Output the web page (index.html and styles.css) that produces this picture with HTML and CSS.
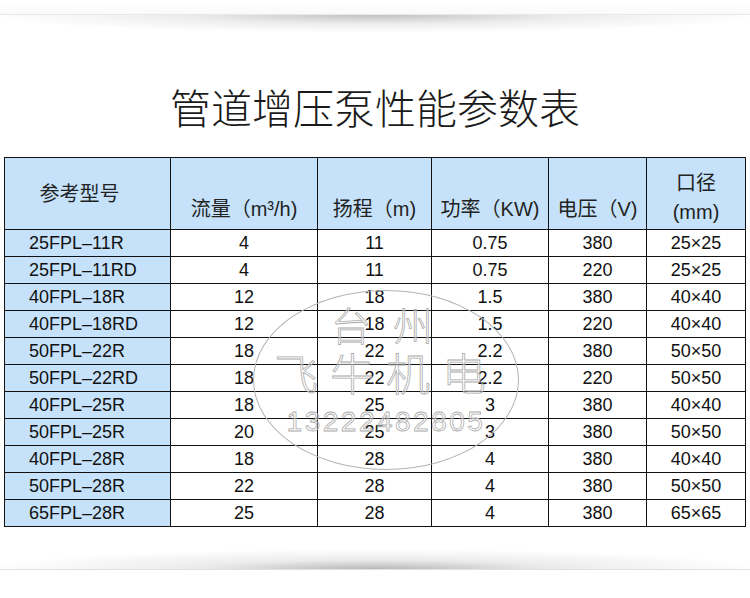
FILE: index.html
```html
<!DOCTYPE html>
<html lang="zh-CN">
<head>
<meta charset="utf-8">
<title>管道增压泵性能参数表</title>
<link rel="stylesheet" href="styles.css">
</head>
<body>
<div class="page">
  <div class="top-edge"></div>
  <div class="top-shadow"></div>
  <h1 class="title">管道增压泵性能参数表</h1>
  <div class="table-wrap">
    <table class="spec">
      <colgroup>
        <col class="c1"><col class="c2"><col class="c3"><col class="c4"><col class="c5"><col class="c6">
      </colgroup>
      <thead>
        <tr>
          <th class="h-mid">参考型号</th>
          <th class="h-low">流量（m³/h)</th>
          <th class="h-low">扬程（m)</th>
          <th class="h-low">功率（KW)</th>
          <th class="h-low">电压（V)</th>
          <th class="h-two">口径<br>(mm)</th>
        </tr>
      </thead>
      <tbody>
        <tr><td class="model">25FPL–11R</td><td>4</td><td>11</td><td>0.75</td><td>380</td><td>25×25</td></tr>
        <tr><td class="model">25FPL–11RD</td><td>4</td><td>11</td><td>0.75</td><td>220</td><td>25×25</td></tr>
        <tr><td class="model">40FPL–18R</td><td>12</td><td>18</td><td>1.5</td><td>380</td><td>40×40</td></tr>
        <tr><td class="model">40FPL–18RD</td><td>12</td><td>18</td><td>1.5</td><td>220</td><td>40×40</td></tr>
        <tr><td class="model">50FPL–22R</td><td>18</td><td>22</td><td>2.2</td><td>380</td><td>50×50</td></tr>
        <tr><td class="model">50FPL–22RD</td><td>18</td><td>22</td><td>2.2</td><td>220</td><td>50×50</td></tr>
        <tr><td class="model">40FPL–25R</td><td>18</td><td>25</td><td>3</td><td>380</td><td>40×40</td></tr>
        <tr><td class="model">50FPL–25R</td><td>20</td><td>25</td><td>3</td><td>380</td><td>50×50</td></tr>
        <tr><td class="model">40FPL–28R</td><td>18</td><td>28</td><td>4</td><td>380</td><td>40×40</td></tr>
        <tr><td class="model">50FPL–28R</td><td>22</td><td>28</td><td>4</td><td>380</td><td>50×50</td></tr>
        <tr><td class="model">65FPL–28R</td><td>25</td><td>28</td><td>4</td><td>380</td><td>65×65</td></tr>
      </tbody>
    </table>
    <div class="watermark">
      <div class="wm-line wm-city">台州</div>
      <div class="wm-line wm-name">飞牛机电</div>
      <div class="wm-line wm-phone">13222482805</div>
    </div>
  </div>
  <div class="bottom-shadow"></div>
  <div class="bottom-edge"></div>
</div>
</body>
</html>
```

FILE: styles.css
```css
html, body {
  margin: 0;
  padding: 0;
  background: #ffffff;
}

body {
  font-family: "Liberation Sans", "Noto Sans CJK SC", sans-serif;
  color: #111111;
}

.page {
  width: 750px;
  height: 598px;
  overflow: hidden;
  display: flex;
  flex-direction: column;
}

.top-edge {
  height: 14px;
  background: linear-gradient(#ffffff, #fafafa);
  border-bottom: 1px solid #e8e8e8;
}

.top-shadow {
  height: 18px;
  background: radial-gradient(ellipse 52% 100% at 50% 0%, rgba(0, 0, 0, 0.24), rgba(0, 0, 0, 0.07) 50%, rgba(0, 0, 0, 0) 100%);
}

.title {
  margin: 49px 0 27px;
  height: 48px;
  line-height: 48px;
  text-align: center;
  font-family: "Noto Sans CJK SC", sans-serif;
  font-weight: 300;
  font-size: 41px;
  color: #1a1a1a;
}

.table-wrap {
  position: relative;
  margin-left: 4px;
  width: 741px;
}

.spec {
  border-collapse: collapse;
  width: 741px;
  table-layout: fixed;
}

.c1 { width: 166px; }
.c2 { width: 147px; }
.c3 { width: 114px; }
.c4 { width: 117px; }
.c5 { width: 98px; }
.c6 { width: 99px; }

.spec th,
.spec td {
  border: 1px solid #111111;
  padding: 0;
}

.spec th {
  background: #c6e2fa;
  font-weight: normal;
  font-size: 20px;
  color: #222222;
  vertical-align: middle;
}

.spec .h-mid {
  height: 69px;
  padding-right: 16px;
  padding-bottom: 2px;
}

.spec .h-low {
  height: 43px;
  padding-top: 28px;
  white-space: nowrap;
}

.spec .h-two {
  height: 63px;
  padding-top: 8px;
  line-height: 29px;
}

.spec td {
  height: 26px;
  font-size: 18px;
  text-align: center;
  vertical-align: middle;
  line-height: 26px;
  color: #111111;
}

.spec td.model {
  background: #c6e2fa;
  text-align: left;
  padding-left: 24px;
}

.watermark {
  position: absolute;
  left: 249px;
  top: 133px;
  width: 264px;
  height: 178px;
  border: 1px solid #b4b4b4;
  border-radius: 50%;
  display: flex;
  flex-direction: column;
  align-items: center;
  pointer-events: none;
  font-family: "Noto Sans CJK SC", sans-serif;
  font-weight: 300;
  color: rgba(255, 255, 255, 0.35);
  -webkit-text-stroke: 0.8px #acacac;
}

.wm-line {
  line-height: 1;
  white-space: nowrap;
}

.wm-city {
  margin-top: 13px;
  font-size: 40px;
  letter-spacing: 22px;
  margin-left: 14px;
}

.wm-name {
  margin-top: 6px;
  font-size: 44px;
  letter-spacing: 12px;
}

.wm-phone {
  margin-top: 14px;
  font-family: "Liberation Sans", sans-serif;
  font-size: 28px;
  letter-spacing: 2.5px;
}

.bottom-shadow {
  margin-top: 22px;
  height: 20px;
  background: radial-gradient(ellipse 52% 100% at 50% 100%, rgba(0, 0, 0, 0.28), rgba(0, 0, 0, 0.08) 45%, rgba(0, 0, 0, 0) 100%);
}

.bottom-edge {
  height: 1px;
  background: #e0e0e0;
}
```
